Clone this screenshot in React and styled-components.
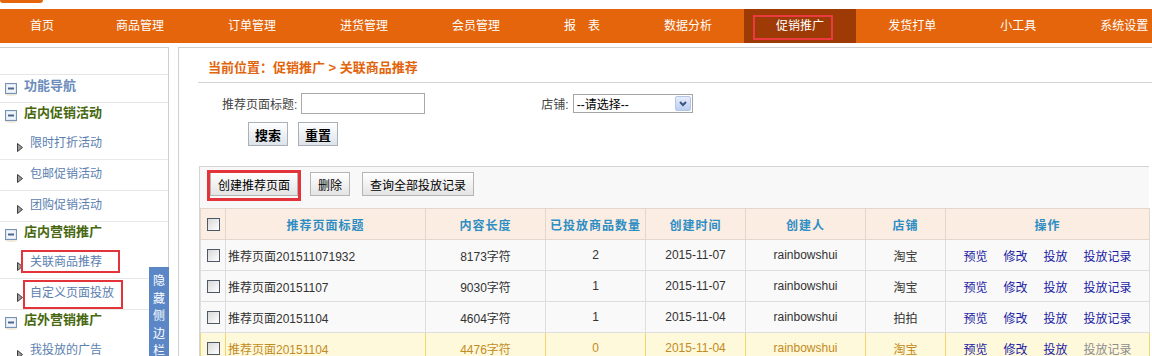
import React from "react";
import styled, { createGlobalStyle } from "styled-components";

const GlobalStyle = createGlobalStyle`
	body {
		margin: 0;
		background: #fff;
		color: #333;
		font-family: "Liberation Sans", "Noto Sans CJK SC", sans-serif;
		font-size: 12px;
	}
`;

const Page = styled.div`
	display: flex;
	flex-direction: column;
	height: 356px;
	overflow: hidden;
	width: 1152px;
`;

const TopStrip = styled.div`
	height: 9px;
`;

const TopNub = styled.div`
	background: #e4650b;
	border-radius: 0 0 6px 6px;
	height: 3px;
	width: 43px;
`;

const NavBar = styled.ul`
	background: #e4650b;
	display: flex;
	height: 34px;
	list-style: none;
	margin: 0;
	padding: 0;
`;

const NavItem = styled.li`
	background: ${(p) => (p.$active ? "#9d3a05" : "transparent")};
	color: #fff;
	line-height: 34px;
	padding: 0 32px;
	position: relative;
	white-space: nowrap;

	&:first-child {
		padding: 0 30px;
	}

	${(p) =>
		p.$active &&
		`
		&::after {
			border: 2px solid #ec3b40;
			box-sizing: border-box;
			content: "";
			height: 25px;
			left: 9px;
			position: absolute;
			top: 6px;
			width: 80px;
		}
	`}
`;

const Body = styled.div`
	display: flex;
	flex: 1;
	gap: 9px;
	margin-top: 4px;
	min-height: 0;
`;

const Sidebar = styled.aside`
	border-right: 1px solid #cfcfcf;
	border-top: 1px solid #cfcfcf;
	flex: none;
	padding-top: 26px;
	position: relative;
	width: 168px;
`;

const SideHeader = styled.div`
	align-items: flex-start;
	border-bottom: ${(p) => (p.$first ? "1px solid #e6e6e6" : "none")};
	border-top: ${(p) => (p.$first ? "1px solid #e6e6e6" : "none")};
	color: ${(p) => (p.$first ? "#6b8cbc" : "#47680f")};
	display: flex;
	font-size: 13px;
	font-weight: bold;
	height: 23px;
	line-height: 14px;
	padding: ${(p) => (p.$first ? "4px" : "3px")} 0 0 5px;
`;

const HeaderIcon = styled.svg`
	flex: none;
	margin: 4px 7px 0 0;
`;

const SubItem = styled.div`
	align-items: flex-start;
	border-bottom: 1px solid #e8e8e8;
	color: #5a80b0;
	display: flex;
	height: 23px;
	line-height: 14px;
	padding: 7px 0 0 17px;
`;

const Arrow = styled.svg`
	flex: none;
	margin: 7px 7px 0 0;
`;

const Marked = styled.span`
	position: relative;

	&::after {
		border: 2px solid #e3333b;
		bottom: ${(p) => p.$box[2]}px;
		content: "";
		left: ${(p) => p.$box[3]}px;
		position: absolute;
		right: ${(p) => p.$box[1]}px;
		top: ${(p) => p.$box[0]}px;
	}
`;

const HideTab = styled.div`
	background: #5b87c7;
	box-sizing: border-box;
	color: #fff;
	height: 120px;
	line-height: 17.5px;
	padding: 6px 4px 0;
	position: absolute;
	right: -1px;
	text-align: center;
	top: 219px;
	width: 20px;
	word-break: break-all;
`;

const Main = styled.main`
	border-left: 1px solid #cfcfcf;
	border-top: 1px solid #cfcfcf;
	flex: 1;
	min-width: 0;
`;

const Crumb = styled.div`
	border-bottom: 1px solid #d4d4d4;
	color: #e2650d;
	font-size: 13px;
	font-weight: bold;
	line-height: 14px;
	margin-left: 19px;
	padding: 13px 0 7px 10px;
`;

const FormRow = styled.div`
	align-items: center;
	display: flex;
	height: 21px;
	margin-top: 10px;
	padding-left: 43px;
`;

const Label = styled.label`
	color: #444;
	margin-left: ${(p) => p.$gap || 0}px;
	margin-right: 4px;
`;

const TextInput = styled.input`
	border: 1px solid #a9a9a9;
	box-sizing: border-box;
	height: 21px;
	margin: 0;
	padding: 0 3px;
	width: 124px;
`;

const FakeSelect = styled.div`
	align-items: center;
	border: 1px solid #a5a5a5;
	box-sizing: border-box;
	color: #000;
	display: flex;
	height: 19px;
	justify-content: space-between;
	padding: 0 1px 0 3px;
	width: 120px;
`;

const SelectButton = styled.span`
	align-items: center;
	background: linear-gradient(#e6edfb, #bccff1);
	border: 1px solid #b3c6ea;
	border-radius: 2px;
	box-sizing: border-box;
	display: flex;
	height: 15px;
	justify-content: center;
	width: 16px;
`;

const ButtonRow = styled.div`
	display: flex;
	gap: 10px;
	margin-top: 8px;
	padding-left: 69px;
`;

const SearchButton = styled.button`
	background: linear-gradient(#fff, #dee3ea);
	border: 1px solid #aab0b8;
	color: #000;
	font-family: inherit;
	font-size: 13px;
	font-weight: bold;
	height: 24px;
	padding: 0;
	width: 40px;
`;

const TableBox = styled.section`
	border-left: 1px solid #d4d4d4;
	border-top: 1px solid #d4d4d4;
	margin: 20px 3px 0 20px;
`;

const Toolbar = styled.div`
	background: #f8f8f8;
	box-sizing: border-box;
	display: flex;
	gap: 12px;
	height: 41px;
	padding: 5px 0 0 10px;
`;

const ToolButton = styled.button`
	background: linear-gradient(#fff, #e4e4e4);
	border: 1px solid #b5b5b5;
	color: #000;
	font-family: inherit;
	font-size: 12px;
	height: 24px;
	padding: 0 7px;
	position: relative;

	${(p) =>
		p.$marked &&
		`
		&::after {
			border: 3px solid #e3333b;
			bottom: -6px;
			content: "";
			left: -4px;
			position: absolute;
			right: -4px;
			top: -3px;
		}
	`}
`;

const Table = styled.table`
	border-collapse: collapse;
	table-layout: fixed;
	width: 949px;
`;

const Th = styled.th`
	background: #fcede3;
	border: 1px solid #e2d6cf;
	color: #2d8ec3;
	font-size: 12px;
	height: 30px;
	letter-spacing: 1px;
	padding: 0;
	text-align: center;
`;

const Td = styled.td`
	background: ${(p) => (p.$hot ? "#fff9dc" : "#f9f9f9")};
	border: 1px solid ${(p) => (p.$hot ? "#f1d66f" : "#dedede")};
	color: ${(p) => (p.$hot ? "#c28b22" : "#333")};
	height: 30px;
	padding: 0 ${(p) => (p.$left ? "2px" : "0")};
	text-align: ${(p) => (p.$left ? "left" : "center")};
	white-space: nowrap;
`;

const Check = styled.span`
	background: linear-gradient(135deg, #d8d8d8, #fff);
	border: 1px solid #4d5966;
	box-sizing: border-box;
	display: inline-block;
	height: 13px;
	vertical-align: middle;
	width: 13px;
`;

const ActionLink = styled.a`
	color: ${(p) => (p.$muted ? "#8d8d8d" : "#1b1ba3")};
	margin: 0 8px;
	text-decoration: none;
`;

const navItems = ["首页", "商品管理", "订单管理", "进货管理", "会员管理", "报　表", "数据分析", "促销推广", "发货打单", "小工具", "系统设置"];

const columns = [
	{ label: "", width: 25 },
	{ label: "推荐页面标题", width: 200 },
	{ label: "内容长度", width: 120 },
	{ label: "已投放商品数量", width: 100 },
	{ label: "创建时间", width: 100 },
	{ label: "创建人", width: 120 },
	{ label: "店铺", width: 80 },
	{ label: "操作", width: 204 },
];

const rows = [
	{ title: "推荐页面201511071932", length: "8173字符", count: 2, date: "2015-11-07", shop: "淘宝" },
	{ title: "推荐页面20151107", length: "9030字符", count: 1, date: "2015-11-07", shop: "淘宝" },
	{ title: "推荐页面20151104", length: "4604字符", count: 1, date: "2015-11-04", shop: "拍拍" },
	{ title: "推荐页面20151104", length: "4476字符", count: 0, date: "2015-11-04", shop: "淘宝", hot: true },
];

const BoxIcon = () => (
	<HeaderIcon width="12" height="13" viewBox="0 0 12 13">
		<ellipse cx="6" cy="11.5" rx="6" ry="1.5" fill="#efe8da" />
		<rect x="0.5" y="0.5" width="11" height="10" fill="#dfe8f3" stroke="#7791b3" />
		<rect x="2" y="2" width="8" height="7" fill="#f1f5fa" />
		<line x1="3" y1="5.5" x2="9" y2="5.5" stroke="#4a668e" strokeWidth="2" />
	</HeaderIcon>
);

const Tri = () => (
	<Arrow width="6" height="9" viewBox="0 0 6 9">
		<polygon points="0.5,0.5 5.5,4.5 0.5,8.5" fill="#9c9c9c" stroke="#3f3f3f" />
	</Arrow>
);

const Sub = ({ children, box }) => (
	<SubItem>
		<Tri />
		{box ? <Marked $box={box}>{children}</Marked> : <span>{children}</span>}
	</SubItem>
);

const Head = ({ children, first }) => (
	<SideHeader $first={first}>
		<BoxIcon />
		<span>{children}</span>
	</SideHeader>
);

const App = () => (
	<Page>
		<GlobalStyle />
		<TopStrip>
			<TopNub />
		</TopStrip>
		<NavBar>
			{navItems.map((item) => (
				<NavItem key={item} $active={item === "促销推广"}>
					{item}
				</NavItem>
			))}
		</NavBar>
		<Body>
			<Sidebar>
				<Head first>功能导航</Head>
				<Head>店内促销活动</Head>
				<Sub>限时打折活动</Sub>
				<Sub>包邮促销活动</Sub>
				<Sub>团购促销活动</Sub>
				<Head>店内营销推广</Head>
				<Sub box={[-5, -18, -4, -9]}>关联商品推荐</Sub>
				<Sub box={[-6, -9, -9, -7]}>自定义页面投放</Sub>
				<Head>店外营销推广</Head>
				<Sub>我投放的广告</Sub>
				<HideTab>隐藏侧边栏</HideTab>
			</Sidebar>
			<Main>
				<Crumb>当前位置：促销推广 &gt; 关联商品推荐</Crumb>
				<FormRow>
					<Label>推荐页面标题:</Label>
					<TextInput />
					<Label $gap={116}>店铺:</Label>
					<FakeSelect>
						<span>--请选择--</span>
						<SelectButton>
							<svg width="8" height="6" viewBox="0 0 8 6">
								<polyline points="1,1 4,4 7,1" fill="none" stroke="#3b5584" strokeWidth="2" />
							</svg>
						</SelectButton>
					</FakeSelect>
				</FormRow>
				<ButtonRow>
					<SearchButton>搜索</SearchButton>
					<SearchButton>重置</SearchButton>
				</ButtonRow>
				<TableBox>
					<Toolbar>
						<ToolButton $marked>创建推荐页面</ToolButton>
						<ToolButton>删除</ToolButton>
						<ToolButton>查询全部投放记录</ToolButton>
					</Toolbar>
					<Table>
						<colgroup>
							{columns.map((c, i) => (
								<col key={i} style={{ width: c.width }} />
							))}
						</colgroup>
						<thead>
							<tr>
								{columns.map((c, i) => (
									<Th key={i}>{i === 0 ? <Check /> : c.label}</Th>
								))}
							</tr>
						</thead>
						<tbody>
							{rows.map((r, i) => (
								<tr key={i}>
									<Td $hot={r.hot}>
										<Check />
									</Td>
									<Td $hot={r.hot} $left>
										{r.title}
									</Td>
									<Td $hot={r.hot}>{r.length}</Td>
									<Td $hot={r.hot}>{r.count}</Td>
									<Td $hot={r.hot}>{r.date}</Td>
									<Td $hot={r.hot}>rainbowshui</Td>
									<Td $hot={r.hot}>{r.shop}</Td>
									<Td $hot={r.hot}>
										<ActionLink href="#">预览</ActionLink>
										<ActionLink href="#">修改</ActionLink>
										<ActionLink href="#">投放</ActionLink>
										<ActionLink href="#" $muted={r.hot}>
											投放记录
										</ActionLink>
									</Td>
								</tr>
							))}
						</tbody>
					</Table>
				</TableBox>
			</Main>
		</Body>
	</Page>
);

export default App;
